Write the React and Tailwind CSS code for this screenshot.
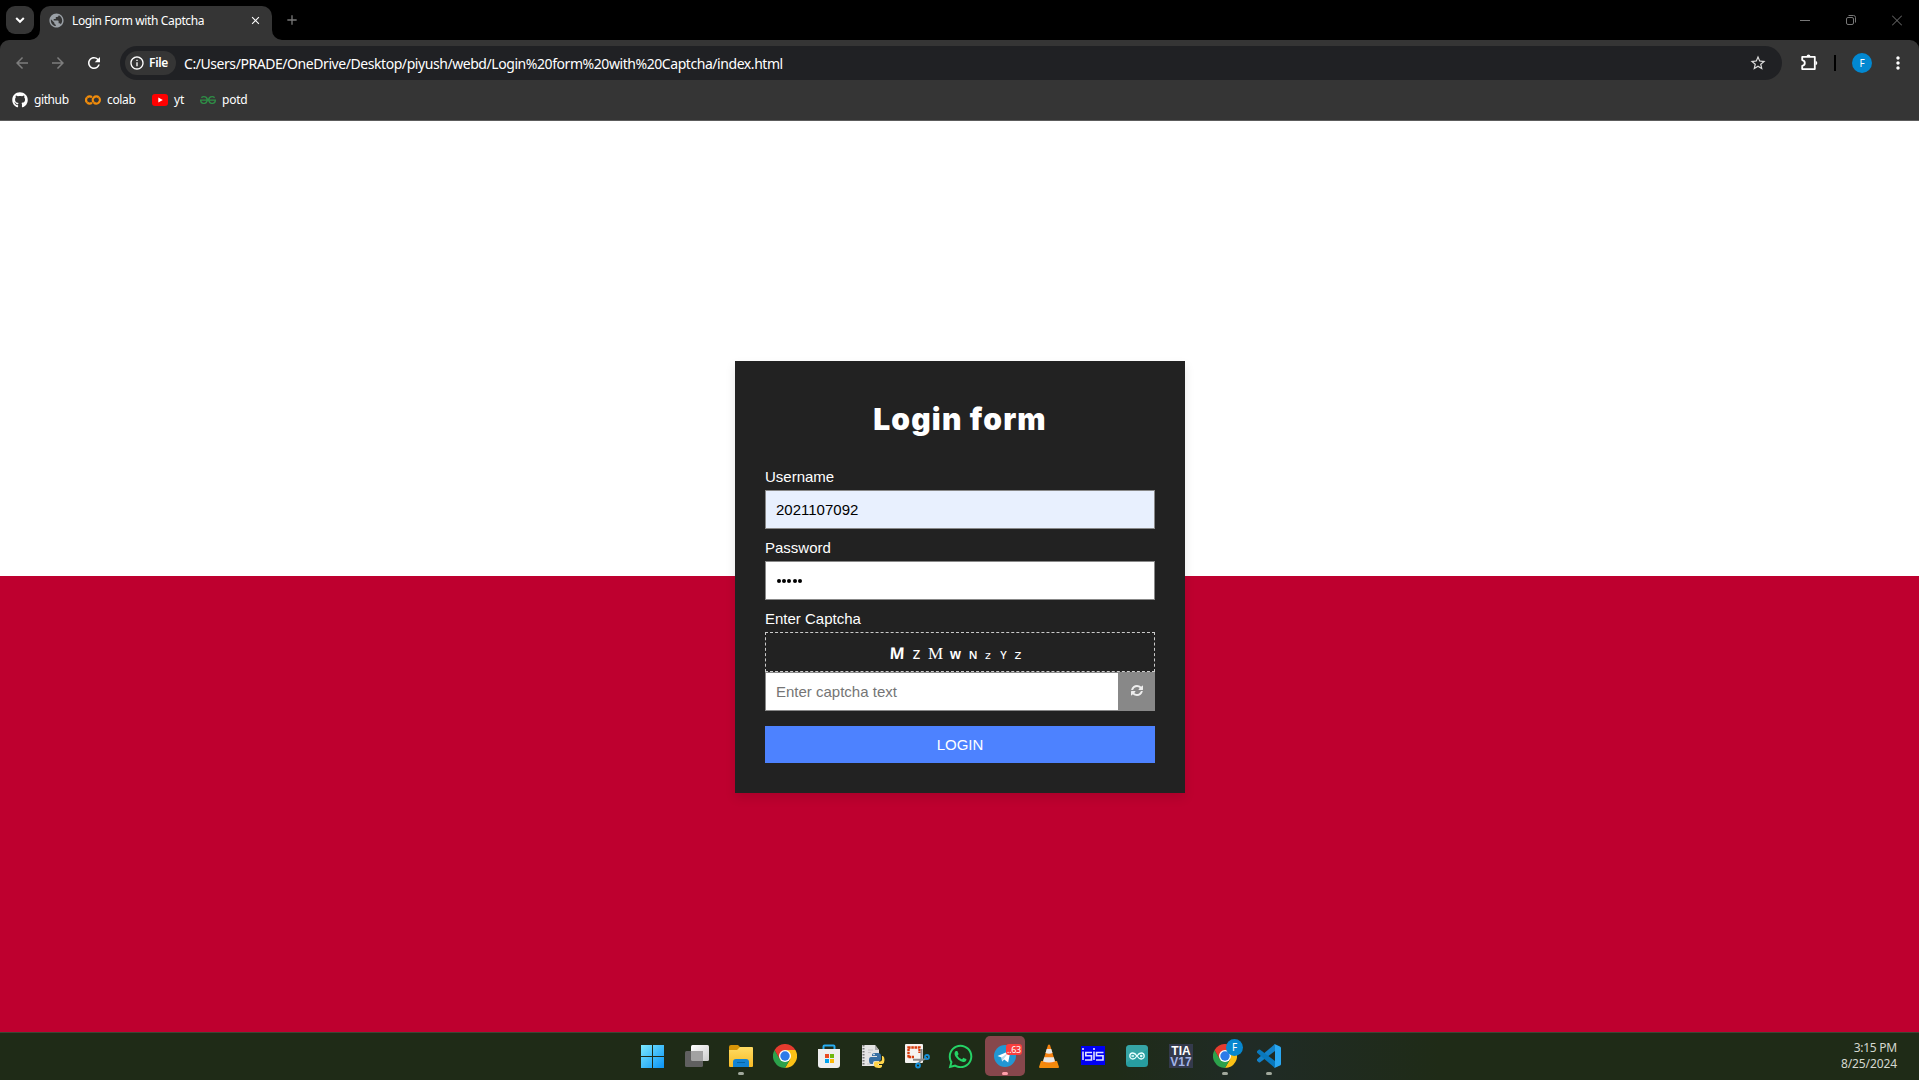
import React from "react";
import {
  MdPublic,
  MdClose,
  MdAdd,
  MdArrowBack,
  MdArrowForward,
  MdRefresh,
  MdInfoOutline,
  MdStarBorder,
  MdMoreVert,
} from "react-icons/md";
import { FaGithub, FaWhatsapp } from "react-icons/fa";
import { SiGooglecolab, SiGeeksforgeeks } from "react-icons/si";

function TabStrip() {
  return (
    <div className="flex h-10 items-end bg-black">
      <div className="mb-1.5 ml-1.5 flex h-7 w-7 items-center justify-center rounded-[9px] bg-[#353535]">
        <svg width="10" height="8" viewBox="0 0 10 8" fill="none" stroke="#fff" strokeWidth="2">
          <path d="M1.2 2 5 5.8 8.8 2" />
        </svg>
      </div>
      <svg width="10" height="10" viewBox="0 0 10 10" className="-ml-1">
        <path d="M0 10h10V0a10 10 0 0 1-10 10z" fill="#353535" />
      </svg>
      <div className="flex h-[34px] w-[232px] items-center rounded-t-[10px] bg-[#353535] pl-2 pb-[6px] font-['Noto_Sans',sans-serif] text-[12px] text-white">
        <MdPublic size={17} color="#9aa0a6" />
        <span className="ml-[7px] grow pt-px whitespace-nowrap tracking-[-0.37px]">Login Form with Captcha</span>
        <MdClose size={13} className="mr-[10px]" />
      </div>
      <svg width="10" height="10" viewBox="0 0 10 10">
        <path d="M10 10H0V0a10 10 0 0 0 10 10z" fill="#353535" />
      </svg>
      <MdAdd size={16} color="#777" className="mb-3 ml-[2px]" />
      <div className="mr-[17px] mb-[14px] ml-auto flex items-center gap-9 text-[#777]">
        <svg width="10" height="12" viewBox="0 0 10 12" stroke="currentColor">
          <path d="M0 6.5h10" />
        </svg>
        <svg width="10" height="12" viewBox="0 0 10 12" fill="none" stroke="currentColor">
          <rect x=".5" y="3.5" width="7" height="7" rx="1.5" />
          <path d="M2.5 1.5h5q2 0 2 2v5" />
        </svg>
        <svg width="10" height="12" viewBox="0 0 10 12" stroke="currentColor">
          <path d="m0 1.500 10 10M10 1.500l-10 10" />
        </svg>
      </div>
    </div>
  );
}

function Toolbar() {
  return (
    <div className="flex h-[46px] items-center rounded-t-[9px] bg-[#353535] font-['Noto_Sans',sans-serif] text-white">
      <MdArrowBack size={18} color="#7d7d7d" className="ml-[13px]" />
      <MdArrowForward size={18} color="#7d7d7d" className="ml-[18px]" />
      <MdRefresh size={18} className="ml-[18px]" />
      <div className="ml-[17px] flex h-[34px] w-[1662px] items-center rounded-full bg-[#202124] pr-[15px] pl-[5px]">
        <div className="flex h-6 w-[51px] items-center rounded-full bg-[#353535] pl-1 text-[12px] font-semibold">
          <MdInfoOutline size={16} />
          <span className="ml-1 tracking-[-0.3px]">File</span>
        </div>
        <span className="ml-2 grow whitespace-nowrap text-[14px] tracking-[-0.437px]">
          C:/Users/PRADE/OneDrive/Desktop/piyush/webd/Login%20form%20with%20Captcha/index.html
        </span>
        <MdStarBorder size={18} color="#ddd" />
      </div>
      <svg width="17" height="17" viewBox="0 0 17 17" className="mb-px ml-[19px]" fill="none" stroke="#fff" strokeWidth="1.8">
        <path
          d="M1.200 2.900h12.600v12.200H1.200v-3.200q2.600-.4 2.600-2.900T1.200 6.100z"
          strokeLinejoin="round"
        />
        <path d="M5.600 2.200a1.900 1.700 0 0 1 3.800 0zM14.600 7.100a1.700 1.900 0 0 1 0 3.800z" fill="#fff" stroke="none" />
      </svg>
      <div className="ml-4 h-4 w-[2px] bg-black" />
      <div className="ml-4 flex h-5 w-5 items-center justify-center rounded-full bg-[#0288d1] text-[10px]">F</div>
      <MdMoreVert size={20} className="ml-4" />
    </div>
  );
}

function Bookmarks() {
  return (
    <div className="flex h-[35px] items-start border-b border-[#5c5c5c] bg-[#353535] pt-[6px] pl-3 font-['Noto_Sans',sans-serif] text-[12px] leading-4 text-white">
      <div className="flex w-[73px] items-center gap-[6px]">
        <FaGithub size={16} />
        <span className="tracking-[-0.4px]">github</span>
      </div>
      <div className="flex w-[67px] items-center gap-[6px]">
        <SiGooglecolab size={16} color="#f28c0a" />
        <span className="tracking-[-0.35px]">colab</span>
      </div>
      <div className="flex w-12 items-center gap-[6px]">
        <svg width="16" height="12" viewBox="0 0 16 12">
          <rect width="16" height="12" rx="3" fill="#f00" />
          <path d="M6.300 3.400v5.200L10.800 6z" fill="#fff" />
        </svg>
        <span>yt</span>
      </div>
      <div className="flex items-center gap-[6px]">
        <SiGeeksforgeeks size={16} color="#2f8d46" />
        <span className="tracking-[-0.2px]">potd</span>
      </div>
    </div>
  );
}

function Captcha() {
  return (
    <div className="flex h-10 items-baseline justify-center border border-dashed border-[#ccc] pt-2 pr-2 text-center leading-6 text-white">
      <span className="w-5 -skew-x-3 font-['Open_Sans',sans-serif] text-[16px] font-bold">M</span>
      <span className="w-[19px] font-['Noto_Sans',sans-serif] text-[13px] font-medium">Z</span>
      <span className="w-[19px] font-['Liberation_Serif',serif] text-[17px]">M</span>
      <span className="w-[21px] font-['Liberation_Sans',sans-serif] text-[14px] font-bold">w</span>
      <span className="w-[14px] font-['Noto_Sans',sans-serif] text-[11px] font-semibold">N</span>
      <span className="w-4 font-['DejaVu_Sans',sans-serif] text-[11px]">z</span>
      <span className="w-[15px] font-['Noto_Sans',sans-serif] text-[11px] font-medium">Y</span>
      <span className="w-[14px] font-['DejaVu_Sans',sans-serif] text-[13px]">z</span>
    </div>
  );
}

function LoginCard() {
  return (
    <div className="h-[432px] w-[450px] bg-[#222] px-[30px] font-['Liberation_Sans',Arial,sans-serif] text-[15px] text-white shadow-[0_5px_10px_rgba(0,0,0,0.1)]">
      <h1 className="mt-[40px] mb-[33px] text-center font-['Inter',sans-serif] text-[30px] leading-9 font-black tracking-[1.2px]">
        Login form
      </h1>
      <div className="flex h-[71px] flex-col">
        <label className="h-[20px] leading-[14px]">Username</label>
        <div className="flex h-[39px] items-center border border-[#888] bg-[#e8f0fe] px-[10px] pt-[2px] text-black">
          2021107092
        </div>
      </div>
      <div className="flex h-[71px] flex-col">
        <label className="h-[20px] leading-[14px]">Password</label>
        <div className="flex h-[39px] items-center gap-[1.2px] border border-[#888] bg-white px-[11px] pt-px">
          {[0, 1, 2, 3, 4].map((i) => (
            <span key={i} className="h-1 w-1 rounded-full bg-black" />
          ))}
        </div>
      </div>
      <div className="flex flex-col">
        <label className="h-[20px] leading-[14px]">Enter Captcha</label>
        <Captcha />
        <div className="flex h-[39px]">
          <div className="flex grow items-center border border-r-0 border-[#888] bg-white px-[10px] pt-[2px] text-[#757575]">
            Enter captcha text
          </div>
          <div className="flex w-[37px] items-center justify-center bg-[#888]">
            <svg width="12" height="12" viewBox="0 0 1536 1536" fill="#eee">
              <path
                transform="translate(0 -128)"
                d="M1511 928q0 5-1 7-64 268-268 434.5t-478 166.5q-146 0-282.500-55t-243.500-157l-129 129q-19 19-45 19t-45-19-19-45v-448q0-26 19-45t45-19h448q26 0 45 19t19 45-19 45l-137 137q71 66 161 102t187 36q134 0 250-65t186-179q11-17 53-117 8-23 30-23h192q13 0 22.500 9.500t9.500 22.500zm25-672v448q0 26-19 45t-45 19h-448q-26 0-45-19t-19-45 19-45l138-138q-148-137-349-137-134 0-250 65t-186 179q-11 17-53 117-8 23-30 23h-199q-13 0-22.500-9.500t-9.500-22.500v-7q65-268 270-434.500t480-166.500q146 0 284 55.500t245 156.500l130-129q19-19 45-19t45 19 19 45z"
              />
            </svg>
          </div>
        </div>
      </div>
      <button className="mt-[15px] flex h-[37px] w-full items-center justify-center bg-[#4d82ff] pt-[2px]">LOGIN</button>
    </div>
  );
}

function ChromeLogo() {
  return (
    <svg width="24" height="24" viewBox="0 0 24 24">
      <path d="M12 6h10.400A12 12 0 0 1 12 24l5.200-9z" fill="#fbc116" />
      <path d="M6.800 15 1.600 6A12 12 0 0 0 12 24l5.200-9z" fill="#2ca14b" />
      <path d="M12 6h10.400A12 12 0 0 0 1.600 6l5.200 9z" fill="#e53b2e" />
      <circle cx="12" cy="12" r="6" fill="#fff" />
      <circle cx="12" cy="12" r="4.700" fill="#2c7be9" />
    </svg>
  );
}

function Task({ children, dot }) {
  return (
    <div className="relative flex h-full w-11 items-center justify-center pb-px">
      {children}
      {dot && <span className="absolute bottom-[5px] left-[19px] h-[3px] w-[6px] rounded-full bg-[#a1a89c]" />}
    </div>
  );
}

function Taskbar() {
  return (
    <div className="flex h-12 items-stretch border-t border-[#3b4634] bg-linear-to-r from-[#1f2b17] from-58% via-[#202b26] via-65% to-[#1f2b17] to-75% font-['Noto_Sans',sans-serif]">
      <div className="w-[631px]" />
      <div className="flex">
        <Task>
          <svg width="24" height="24" viewBox="0 0 24 24">
            <defs>
              <linearGradient id="win" x1="0" y1="0" x2="1" y2="1" gradientUnits="objectBoundingBox">
                <stop stopColor="#7be9ff" />
                <stop offset="1" stopColor="#0a93f5" />
              </linearGradient>
            </defs>
            <path d="M0 1h11v11H0zM12 1h11v11H12zM0 13h11v11H0zM12 13h11v11H12z" fill="url(#win)" />
          </svg>
        </Task>
        <Task>
          <svg width="26" height="24" viewBox="0 0 26 24">
            <defs>
              <linearGradient id="view" x1="0" y1="0" x2="1" y2="1">
                <stop stopColor="#fff" />
                <stop offset="1" stopColor="#ccc" />
              </linearGradient>
            </defs>
            <rect x="7" y="1" width="18" height="16" rx="1.500" fill="url(#view)" />
            <rect x="1" y="7" width="18" height="16" rx="1.500" fill="#606060" />
            <path d="M7 7h12v10H8.500Q7 17 7 15.500z" fill="#a2a2a2" />
          </svg>
        </Task>
        <Task dot>
          <svg width="24" height="24" viewBox="0 0 24 24">
            <defs>
              <linearGradient id="folder" x1="0" y1="0" x2="0" y2="1">
                <stop stopColor="#ffdc64" />
                <stop offset="1" stopColor="#f8bb25" />
              </linearGradient>
            </defs>
            <path d="M0 3q0-2 2-2h7l3 3v4H0z" fill="#d79407" />
            <path d="M0 6h8l3-3h12q1 0 1 1v18q0 1-1 1H1q-1 0-1-1z" fill="url(#folder)" />
            <path d="M4 23v-5q0-3 3-3h10q3 0 3 3v5z" fill="#1383d3" />
            <path d="M8 18.500h8" stroke="#0664a3" />
          </svg>
        </Task>
        <Task>
          <ChromeLogo />
        </Task>
        <Task>
          <svg width="24" height="24" viewBox="0 0 24 24">
            <path d="M6.500 6V2.500q0-1 1-1h9q1 0 1 1V6" fill="none" stroke="#28aef2" strokeWidth="2" />
            <path d="M1 5h22v16q0 3-3 3H4q-3 0-3-3z" fill="#eee" />
            <path d="M8 10h4v4H8z" fill="#e94a21" />
            <path d="M13 10h4v4h-4z" fill="#6fb70e" />
            <path d="M8 15h4v4H8z" fill="#00a3ee" />
            <path d="M13 15h4v4h-4z" fill="#fbb80a" />
          </svg>
        </Task>
        <Task>
          <svg width="24" height="24" viewBox="0 0 24 24" className="overflow-visible">
            <path d="M1 1h13l4 5v16H1z" fill="#e4e4e4" />
            <path d="M2.500 1v21" stroke="#777" strokeWidth="2" strokeDasharray="1.500 1.500" />
            <path d="M14 1v5h4z" fill="#aaa" />
            <path d="M7 6h5M7 8.500h3M6 20h3" stroke="#c6c6c6" />
            <path d="M11 11q0-2 3-2h3q3 0 3 3v3q0 2-2 2h-4q-2 0-2 2v1H10q-2 0-2-4 0-3 2-3h6v-1h-5z" fill="#366fa3" />
            <path d="M21 12h1q1.500 1 1.500 4t-2 4H17v1h4v1q0 2-3.500 2T13 22v-3q0-1.500 2-1.500h4q2 0 2-2z" fill="#ffd54c" />
            <circle cx="13" cy="10.500" r=".8" fill="#fff" />
          </svg>
        </Task>
        <Task>
          <svg width="24" height="24" viewBox="0 0 24 24" className="overflow-visible">
            <rect x="0" y="0" width="18" height="19" rx="1" fill="#f5f3f1" />
            <path d="M3.500 13.500V3.500H14.500V9M3.500 13H9" fill="none" stroke="#d63b0b" strokeWidth="2.400" strokeDasharray="2.500 .7" />
            <path d="M16.500 5v10.500l-3 4M8 15.800h10l4-2" stroke="#888" strokeWidth="2" fill="none" />
            <circle cx="13" cy="21.500" r="2" fill="none" stroke="#168fd8" strokeWidth="1.800" />
            <circle cx="22" cy="13" r="2" fill="none" stroke="#168fd8" strokeWidth="1.800" />
          </svg>
        </Task>
        <Task>
          <FaWhatsapp size={27} color="#25d366" className="mr-px" />
        </Task>
        <div className="relative flex w-11 items-center justify-center pb-px">
          <div className="flex h-10 w-10 items-center justify-center rounded-[5px] bg-[#87474c]">
            <svg width="22" height="22" viewBox="0 0 22 22">
              <circle cx="11" cy="11" r="11" fill="#2297d3" />
              <path d="m3.500 11 13-5.500-2.300 12-4-3-2 2-.7-4z" fill="#fff" />
              <path d="m7.500 12.500 7-5-4.500 6-2 3z" fill="#bcd9eb" />
            </svg>
          </div>
          <span className="absolute top-[11px] right-[5px] h-[11px] w-4 rounded-[3px] bg-[#f93e3e] text-center text-[9px] leading-[11px] tracking-[-0.3px] text-white">
            ..63
          </span>
          <span className="absolute bottom-[5px] left-[19px] h-[3px] w-[6px] rounded-full bg-[#ffa0aa]" />
        </div>
        <Task>
          <svg width="22" height="24" viewBox="0 0 22 24">
            <path d="m3 17-2 6q0 1 1 1h18q1 0 1-1l-2-6z" fill="#f28a0b" />
            <path d="M10 1q1-1 2 0l5.500 18q-6.500 3.500-13 0z" fill="#f58210" />
            <path d="M8.700 5h4.600l1.200 4q-3.500 1.500-7 0zM6.200 13.300h9.600l1.200 4.200q-6 2.200-12 0z" fill="#e7e8e9" />
          </svg>
        </Task>
        <Task>
          <svg width="24" height="19" viewBox="0 0 24 19" className="mb-px">
            <path fill="#0000f4" d="M0 0h24v19H0z" />
            <path
              d="M2 5.500v8.500M2 2v2M11 6.500H4.800v3.200h5.700V14H4M13 5.500v8.500M13 2v2M22.500 6.500h-7v3.200h6.500V14h-7"
              fill="none"
              stroke="#dfe0ff"
              strokeWidth="1.600"
            />
          </svg>
        </Task>
        <Task>
          <svg width="22" height="22" viewBox="0 0 22 22">
            <rect width="22" height="22" rx="3.500" fill="#279da0" />
            <path d="M0 18V4q0-4 4-4h14q4 0 4 4z" fill="#45adab" opacity=".5" />
            <path
              d="M11 11q-2-3-4.200-3a3 3 0 0 0 0 6q2.200 0 4.200-3 2-3 4.200-3a3 3 0 0 1 0 6Q13 14 11 11zM5.500 11h2.500M14 11h2.500M15.200 9.800v2.400"
              fill="none"
              stroke="#e9ffff"
              strokeWidth="1.300"
            />
          </svg>
        </Task>
        <Task>
          <div className="flex h-6 w-6 flex-col items-center bg-[#343a4c] font-['Liberation_Sans',sans-serif] font-bold">
            <span className="pt-px text-[12px] leading-[12px] text-white">TIA</span>
            <span className="text-[12px] leading-[11px] text-[#a3b4e9]">V17</span>
          </div>
        </Task>
        <Task dot>
          <ChromeLogo />
          <span className="absolute top-[6px] right-[4px] flex h-[17px] w-[17px] items-center justify-center rounded-full bg-[#0787cf] text-[10px] text-white">
            F
          </span>
        </Task>
        <Task dot>
          <svg width="24" height="24" viewBox="0 0 24 24">
            <path d="M18 0 0 15.300v1.500l1.700 1.500q.7.500 1.500 0L18 7z" fill="#1481c8" />
            <path d="M18 24 0 8.700V7.200l1.700-1.500q.7-.5 1.500 0L18 17z" fill="#0878bd" />
            <path d="m17.500 0 5.500 2.500q1 .5 1 1.500v16q0 1-1 1.500L17.500 24 18 22V2z" fill="#29a7f2" />
          </svg>
        </Task>
      </div>
      <div className="mr-[22px] ml-auto pt-[7px] text-right text-[12px] leading-4 text-[#d4d8d0]">
        <div className="tracking-[-0.25px]">3:15 PM</div>
        <div className="tracking-[-0.1px]">8/25/2024</div>
      </div>
    </div>
  );
}

export default function App() {
  return (
    <div className="flex h-[1080px] w-[1919px] flex-col overflow-hidden bg-black">
      <TabStrip />
      <Toolbar />
      <Bookmarks />
      <main className="flex h-[911px] items-center justify-center bg-linear-to-b from-white from-50% to-[#be002f] to-50% pl-px">
        <LoginCard />
      </main>
      <Taskbar />
    </div>
  );
}
